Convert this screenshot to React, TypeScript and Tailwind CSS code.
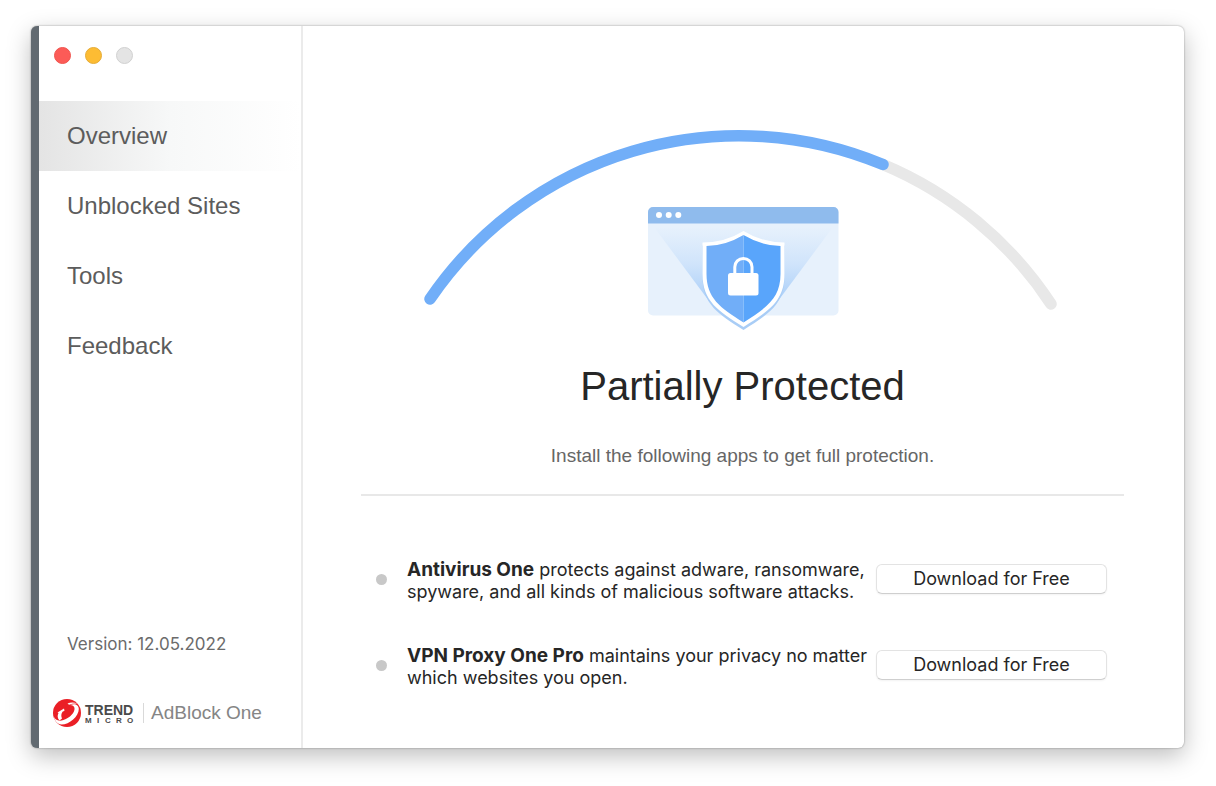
import { useState } from 'react'
import clsx from 'clsx'

const navItems = ['Overview', 'Unblocked Sites', 'Tools', 'Feedback']

const apps = [
  { name: 'Antivirus One', text: 'protects against adware, ransomware, spyware, and all kinds of malicious software attacks.' },
  { name: 'VPN Proxy One Pro', text: 'maintains your privacy no matter which websites you open.' },
]

function TrendMicroLogo() {
  return (
    <svg width="84" height="28" viewBox="0 0 84 28" role="img" aria-label="Trend Micro">
      <circle cx="14" cy="14" r="14" fill="#ea1f26" />
      <path d="M0.500 17C2 21.500 6 22.500 10.500 21C17 18.800 22 13.500 21.500 9C21.200 7 19.500 6 17 6C21.500 4 25.800 5.500 25.800 10C25.800 17.500 16.500 25.500 8.500 25.500C4.500 25 1.500 22 0.500 17Z" fill="#fff" />
      <path d="M4.500 13.500L11 9.500L11.500 11.800L9.500 12.800C8 15 8 17 9 19.500L6.500 21.500C4.300 19 4.200 16.500 5.500 14Z" fill="#fff" />
      <path d="M14.500 4.500Q19 2.300 24.500 4.500Q20 4 16 5.700Z" fill="#fff" />
      <text x="32" y="16" fontSize="14" fontWeight="700" fill="#4a4a4a" fontFamily="Liberation Sans, sans-serif">TREND</text>
      <text x="32 44 52 63 74" y="24" fontSize="8" fontWeight="700" fill="#4a4a4a" fontFamily="Liberation Sans, sans-serif">MICRO</text>
    </svg>
  )
}

function StatusGraphic() {
  return (
    <svg viewBox="0 0 646 206" className="w-full max-w-[646px]" role="img" aria-label="Protection status">
      <defs>
        <linearGradient id="beam" x1="0" y1="0" x2="0" y2="1">
          <stop offset="0" stopColor="#e7f1fc" />
          <stop offset="0.5" stopColor="#d0e4fb" />
          <stop offset="1" stopColor="#a9cef8" />
        </linearGradient>
      </defs>

      {/* Gauge */}
      <path d="M463 38.500A374 374 0 0 1 631 178" fill="none" stroke="#e8e8e8" strokeWidth="11.500" strokeLinecap="round" />
      <path d="M10 173A374 374 0 0 1 463 38.500" fill="none" stroke="#71aef8" strokeWidth="11.500" strokeLinecap="round" />

      {/* Browser window */}
      <rect x="228" y="81" width="190.500" height="108.500" rx="5" fill="#e7f1fc" />
      <path d="M228 97.500V86a5 5 0 0 1 5-5H413.500a5 5 0 0 1 5 5V97.500Z" fill="#8fbbed" />
      <circle cx="239" cy="89" r="3" fill="#fff" />
      <circle cx="248.700" cy="89" r="3" fill="#fff" />
      <circle cx="258.300" cy="89" r="3" fill="#fff" />
      <path d="M234 101H413L358 175H289Z" fill="url(#beam)" />

      {/* Shield */}
      <path d="M323.500 108Q342 119 364.500 119.500V151C364.500 178 349 188 323.500 204C298 188 282.500 178 282.500 151V119.500Q305 119 323.500 108Z" fill="#a9cdf6" />
      <path d="M323.500 105Q342 116.500 364.500 116.500V148C364.500 175 349 185 323.500 201C298 185 282.500 175 282.500 148V116.500Q305 116.500 323.500 105Z" fill="#fff" />
      <path d="M323.500 109Q305 120 286.500 120V148C286.500 172 300 181.500 323.500 196.500Z" fill="#71aef8" />
      <path d="M323.500 109Q342 120 360.500 120V148C360.500 172 347 181.500 323.500 196.500Z" fill="#59a5fb" />

      {/* Lock */}
      <rect x="308" y="147" width="30.500" height="22.500" rx="2.500" fill="#fff" />
      <path d="M314.800 148V141A8.600 8.600 0 0 1 332 141V148" fill="none" stroke="#fff" strokeWidth="3" />
    </svg>
  )
}

export default function App() {
  const [active, setActive] = useState('Overview')

  return (
    <div className="flex min-h-screen bg-white pt-[26px] pr-8 pb-[38px] pl-[31px] font-['Inter',sans-serif] text-[#262626]">
      <div className="flex flex-1 overflow-hidden rounded-md border-l-8 border-[#626a71] bg-white shadow-[0_0_2px_rgba(0,0,0,0.4),0_8px_24px_rgba(0,0,0,0.26)]">
        <aside className="flex w-[264px] shrink-0 flex-col border-r-2 border-[#ebebeb] pb-[21px]">
          <div className="flex gap-[14px] pt-[21px] pl-[15px]">
            <button type="button" aria-label="Close" className="size-[17px] rounded-full border border-[#f0544e] bg-[#fc5b57]" />
            <button type="button" aria-label="Minimize" className="size-[17px] rounded-full border border-[#e5ac38] bg-[#fdbc33]" />
            <button type="button" aria-label="Zoom" disabled className="size-[17px] rounded-full border border-[#d1d1d1] bg-[#e4e4e4]" />
          </div>

          <nav className="mt-[37px] flex flex-col">
            {navItems.map(item => (
              <a
                key={item}
                href="#"
                onClick={() => setActive(item)}
                className={clsx(
                  "flex h-[70px] items-center pl-7 font-['Liberation_Sans',sans-serif] text-2xl text-[#5c5c5c]",
                  active === item && 'bg-linear-to-r from-[#e4e4e4] via-[#f7f8f8] to-white',
                )}
              >
                {item}
              </a>
            ))}
          </nav>

          <p className="mt-auto pl-7 text-[17px] leading-5 text-[#6b6b6b]">Version: 12.05.2022</p>
          <div className="mt-[45px] flex items-center pl-[14px]">
            <TrendMicroLogo />
            <span className="ml-1.5 h-5 border-l border-[#d9d9d9]" />
            <span className="ml-[7px] font-['Liberation_Sans',sans-serif] text-[19px] leading-7 whitespace-nowrap text-[#858585]">AdBlock One</span>
          </div>
        </aside>

        <main className="flex flex-1 flex-col pt-[100px] pr-[60px] pl-[58px]">
          <section className="flex flex-col items-center text-center font-['Liberation_Sans',sans-serif]">
            <StatusGraphic />
            <h1 className="mt-[30px] text-[40px] leading-[48px]">Partially Protected</h1>
            <p className="mt-[34px] text-[19px] leading-6 text-[#666]">Install the following apps to get full protection.</p>
          </section>

          <hr className="mt-[26px] border-t-2 border-[#e8e8e8]" />

          <ul className="mt-[59px] flex flex-col gap-[38px] pr-[17px] pl-[15px]">
            {apps.map(app => (
              <li key={app.name} className="flex items-center">
                <span className="size-[11px] shrink-0 rounded-full bg-[#c8c8c8]" />
                <p className="ml-5 flex-1 pt-1 text-lg leading-[22px]">
                  <strong className="text-[19px] leading-[22px] font-bold">{app.name}</strong> {app.text}
                </p>
                <button type="button" className="ml-1.5 h-[30px] w-[231px] shrink-0 rounded-md border border-[#e3e3e3] border-b-[#cfcfcf] bg-white text-lg leading-6 shadow-xs">
                  Download for Free
                </button>
              </li>
            ))}
          </ul>
        </main>
      </div>
    </div>
  )
}
